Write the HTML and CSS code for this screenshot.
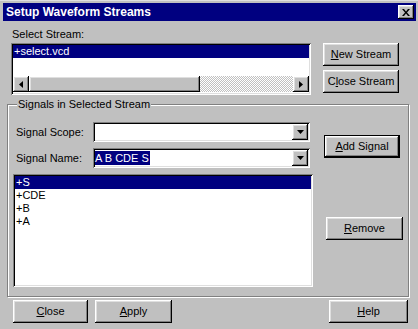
FILE: index.html
```html
<!DOCTYPE html>
<html>
<head>
	<meta charset="UTF-8">
	<title>Setup Waveform Streams</title>
	<link rel="stylesheet" href="styles.css">
</head>
<body>
	<div class="window">
		<div class="titlebar">
			<span class="titleText">Setup Waveform Streams</span>
			<div class="titleClose">
				<svg width="8" height="7" viewBox="0 0 8 7"><path d="M0 0h2l2 2.5L6 0h2L5 3.5 8 7H6L4 4.5 2 7H0l3-3.5z" fill="#000"/></svg>
			</div>
		</div>
		<div class="streamRow">
			<div class="streamLeft">
				<div class="label">Select Stream:</div>
				<div class="listbox streamList">
					<div class="item selected">+select.vcd</div>
					<div class="spacer"></div>
					<div class="hscroll">
						<div class="sbtn"><svg width="4" height="7" viewBox="0 0 4 7"><path d="M4 0v7L0 3.5z" fill="#000"/></svg></div>
						<div class="thumb"></div>
						<div class="track"></div>
						<div class="sbtn"><svg width="4" height="7" viewBox="0 0 4 7"><path d="M0 0v7l4-3.5z" fill="#000"/></svg></div>
					</div>
				</div>
			</div>
			<div class="streamButtons">
				<div class="button"><u>N</u>ew Stream</div>
				<div class="button">C<u>l</u>ose Stream</div>
			</div>
		</div>
		<div class="group">
			<div class="legend">Signals in Selected Stream</div>
			<div class="groupBody">
				<div class="groupLeft">
					<div class="fieldRow">
						<span class="fieldLabel">Signal Scope:</span>
						<div class="combo">
							<div class="comboText"></div>
							<div class="drop"><svg width="7" height="4" viewBox="0 0 7 4"><path d="M0 0h7L3.5 4z" fill="#000"/></svg></div>
						</div>
					</div>
					<div class="fieldRow second">
						<span class="fieldLabel">Signal Name:</span>
						<div class="combo">
							<div class="comboText"><span class="hilite">A B CDE S</span></div>
							<div class="drop"><svg width="7" height="4" viewBox="0 0 7 4"><path d="M0 0h7L3.5 4z" fill="#000"/></svg></div>
						</div>
					</div>
					<div class="listbox signalList">
						<div class="item selected">+S</div>
						<div class="item">+CDE</div>
						<div class="item">+B</div>
						<div class="item">+A</div>
					</div>
				</div>
				<div class="groupButtons">
					<div class="button default"><u>A</u>dd Signal</div>
					<div class="button remove"><u>R</u>emove</div>
				</div>
			</div>
		</div>
		<div class="bottomRow">
			<div class="button closeBtn"><u>C</u>lose</div>
			<div class="button applyBtn"><u>A</u>pply</div>
			<div class="filler"></div>
			<div class="button helpBtn"><u>H</u>elp</div>
		</div>
	</div>
</body>
</html>
```

FILE: styles.css
```css
body {
	margin: 0;
	padding: 0;
	background-color: #c0c0c0;
	font-family: "Liberation Sans", Arial, sans-serif;
	font-size: 11px;
	color: #000;
}
u {
	text-decoration: underline;
	text-underline-offset: 1px;
}
.window {
	width: 418px;
	height: 329px;
	box-sizing: border-box;
	padding: 3px 2px 0 3px;
	border-top: 1px solid #dfdfdf;
}
.titlebar {
	height: 18px;
	margin-top: -1px;
	background-color: #000080;
	display: flex;
	align-items: center;
	padding: 0 2px 0 3px;
}
.titleText {
	flex: 1;
	color: #fff;
	font-weight: bold;
	font-size: 12px;
}
.titleClose {
	width: 16px;
	height: 14px;
	box-sizing: border-box;
	background-color: #c0c0c0;
	box-shadow: inset -1px -1px #000, inset 1px 1px #fff, inset -2px -2px #808080, inset 2px 2px #dfdfdf;
	display: flex;
	align-items: center;
	justify-content: center;
}
.button {
	height: 23px;
	box-sizing: border-box;
	background-color: #c0c0c0;
	box-shadow: inset -1px -1px #000, inset 1px 1px #fff, inset -2px -2px #808080, inset 2px 2px #dfdfdf;
	display: flex;
	align-items: center;
	justify-content: center;
	line-height: 13px;
}
.button.default {
	border: 1px solid #000;
}
.streamRow {
	display: flex;
	padding: 7px 0 0 8px;
}
.label {
	height: 13px;
	line-height: 13px;
	margin-left: 1px;
	margin-bottom: 2px;
}
.listbox {
	box-sizing: border-box;
	background-color: #fff;
	padding: 2px;
	box-shadow: inset 1px 1px #808080, inset -1px -1px #fff, inset 2px 2px #000, inset -2px -2px #dfdfdf;
}
.streamList {
	width: 300px;
	height: 52px;
	display: flex;
	flex-direction: column;
}
.item {
	height: 13px;
	line-height: 13px;
	padding-left: 1px;
	white-space: nowrap;
}
.item.selected {
	background-color: #000080;
	color: #fff;
}
.spacer {
	flex: 1;
}
.hscroll {
	height: 16px;
	display: flex;
	margin-bottom: 1px;
}
.sbtn {
	width: 16px;
	height: 16px;
	box-sizing: border-box;
	background-color: #c0c0c0;
	box-shadow: inset -1px -1px #000, inset 1px 1px #fff, inset -2px -2px #808080, inset 2px 2px #dfdfdf;
	display: flex;
	align-items: center;
	justify-content: center;
}
.thumb {
	width: 171px;
	height: 16px;
	box-sizing: border-box;
	background-color: #c0c0c0;
	box-shadow: inset -1px -1px #000, inset 1px 1px #fff, inset -2px -2px #808080, inset 2px 2px #dfdfdf;
}
.track {
	flex: 1;
	background: repeating-conic-gradient(#c0c0c0 0 25%, #fff 0 50%) 0 0 / 2px 2px;
}
.streamButtons {
	display: flex;
	flex-direction: column;
	gap: 4px;
	margin-left: 12px;
	padding-top: 15px;
	width: 76px;
}
.group {
	margin: 9px 0 0 4px;
	width: 402px;
	height: 193px;
	box-sizing: border-box;
	border: 1px solid #808080;
	box-shadow: inset 1px 1px #fff, 1px 1px #fff;
}
.legend {
	width: fit-content;
	height: 13px;
	line-height: 13px;
	margin: -7px 0 0 9px;
	padding: 0 1px;
	background-color: #c0c0c0;
}
.groupBody {
	display: flex;
	padding-left: 5px;
}
.fieldRow {
	display: flex;
	align-items: center;
	margin-top: 11px;
	height: 20px;
}
.fieldRow.second {
	margin-top: 6px;
}
.fieldLabel {
	width: 77px;
	margin-left: 3px;
}
.combo {
	width: 217px;
	height: 20px;
	box-sizing: border-box;
	background-color: #fff;
	padding: 2px;
	display: flex;
	box-shadow: inset 1px 1px #808080, inset -1px -1px #fff, inset 2px 2px #000, inset -2px -2px #dfdfdf;
}
.comboText {
	flex: 1;
	display: flex;
	align-items: center;
}
.hilite {
	background-color: #000080;
	color: #fff;
	height: 14px;
	line-height: 14px;
	padding: 0 1px 0 0;
}
.drop {
	width: 16px;
	height: 16px;
	box-sizing: border-box;
	background-color: #c0c0c0;
	box-shadow: inset -1px -1px #000, inset 1px 1px #fff, inset -2px -2px #808080, inset 2px 2px #dfdfdf;
	display: flex;
	align-items: center;
	justify-content: center;
}
.signalList {
	width: 300px;
	height: 113px;
	margin-top: 6px;
}
.groupButtons {
	display: flex;
	flex-direction: column;
	margin-left: 11px;
	padding-top: 24px;
	width: 76px;
}
.button.remove {
	margin: 59px 0 0 2px;
	width: 77px;
}
.bottomRow {
	display: flex;
	margin: 3px 0 0 10px;
}
.closeBtn {
	width: 75px;
}
.applyBtn {
	width: 77px;
	margin-left: 7px;
}
.filler {
	flex: 1;
}
.helpBtn {
	width: 79px;
	margin-right: 8px;
}
```
